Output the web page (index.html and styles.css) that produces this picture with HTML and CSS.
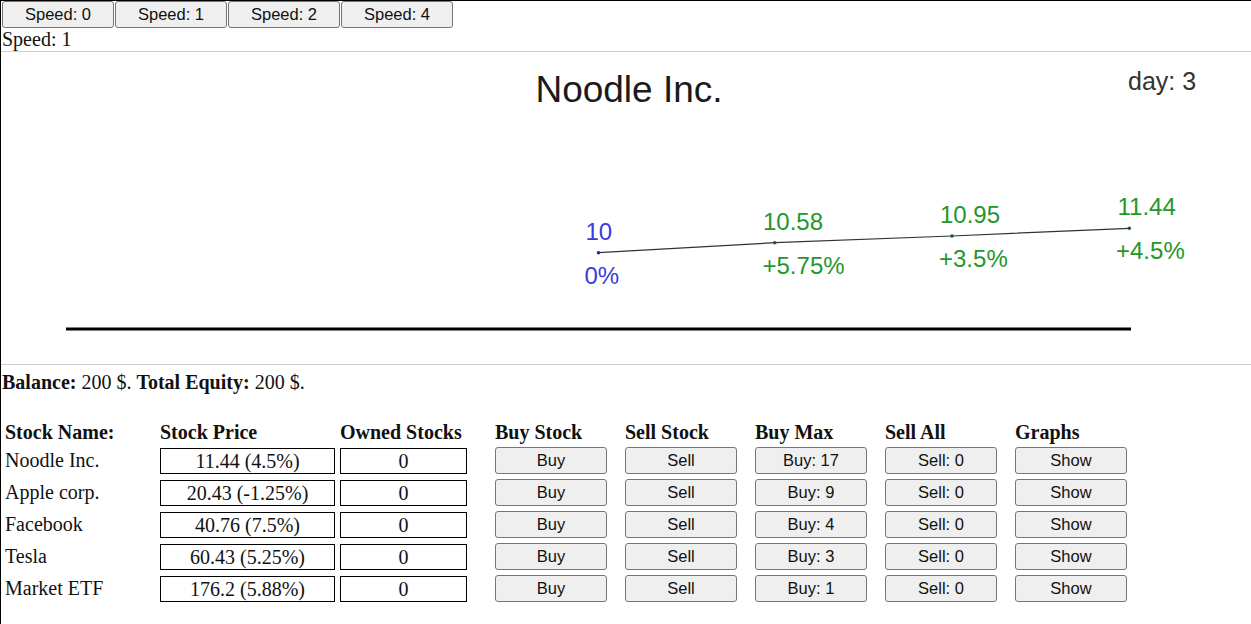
FILE: index.html
```html
<!DOCTYPE html>
<html>
<head>
<meta charset="utf-8">
<link rel="stylesheet" href="styles.css">
</head>
<body>
<div class="page">
  <div class="speeds">
    <button class="btn speed-btn">Speed: 0</button>
    <button class="btn speed-btn">Speed: 1</button>
    <button class="btn speed-btn">Speed: 2</button>
    <button class="btn speed-btn">Speed: 4</button>
  </div>
  <div class="speed-label">Speed: 1</div>
  <div class="chart">
    <svg class="chart-svg" width="1250" height="312" viewBox="0 0 1250 312">
      <text class="title" x="628" y="50" text-anchor="middle">Noodle Inc.</text>
      <text class="day" x="1127" y="38">day: 3</text>
      <polyline class="trend" points="597.5,200.7 773.7,190.7 951,184 1128.3,176.3"/>
      <circle class="dot-blue" cx="597.5" cy="200.7" r="1.8"/>
      <circle class="dot-green" cx="773.7" cy="190.7" r="1.8"/>
      <circle class="dot-green" cx="951" cy="184" r="1.8"/>
      <circle class="dot-green" cx="1128.3" cy="176.3" r="1.8"/>
      <text class="lbl blue" x="584.5" y="187.5">10</text>
      <text class="lbl blue" x="583.5" y="231.5">0%</text>
      <text class="lbl green" x="762" y="177.5">10.58</text>
      <text class="lbl green" x="761.5" y="221.5">+5.75%</text>
      <text class="lbl green" x="939" y="171">10.95</text>
      <text class="lbl green" x="938" y="215">+3.5%</text>
      <text class="lbl green" x="1116.5" y="163">11.44</text>
      <text class="lbl green" x="1115" y="206.5">+4.5%</text>
      <line class="axis" x1="65" y1="277" x2="1130" y2="277"/>
    </svg>
  </div>
  <p class="balance"><b>Balance:</b> 200 $. <b>Total Equity:</b> 200 $.</p>
  <div class="stocks">
    <div class="row head">
      <div>Stock Name:</div>
      <div>Stock Price</div>
      <div>Owned Stocks</div>
      <div>Buy Stock</div>
      <div>Sell Stock</div>
      <div>Buy Max</div>
      <div>Sell All</div>
      <div>Graphs</div>
    </div>
    <div class="row">
      <div class="name">Noodle Inc.</div>
      <div><div class="box price">11.44 (4.5%)</div></div>
      <div><div class="box owned">0</div></div>
      <div><button class="btn act">Buy</button></div>
      <div><button class="btn act">Sell</button></div>
      <div><button class="btn act">Buy: 17</button></div>
      <div><button class="btn act">Sell: 0</button></div>
      <div><button class="btn act">Show</button></div>
    </div>
    <div class="row">
      <div class="name">Apple corp.</div>
      <div><div class="box price">20.43 (-1.25%)</div></div>
      <div><div class="box owned">0</div></div>
      <div><button class="btn act">Buy</button></div>
      <div><button class="btn act">Sell</button></div>
      <div><button class="btn act">Buy: 9</button></div>
      <div><button class="btn act">Sell: 0</button></div>
      <div><button class="btn act">Show</button></div>
    </div>
    <div class="row">
      <div class="name">Facebook</div>
      <div><div class="box price">40.76 (7.5%)</div></div>
      <div><div class="box owned">0</div></div>
      <div><button class="btn act">Buy</button></div>
      <div><button class="btn act">Sell</button></div>
      <div><button class="btn act">Buy: 4</button></div>
      <div><button class="btn act">Sell: 0</button></div>
      <div><button class="btn act">Show</button></div>
    </div>
    <div class="row">
      <div class="name">Tesla</div>
      <div><div class="box price">60.43 (5.25%)</div></div>
      <div><div class="box owned">0</div></div>
      <div><button class="btn act">Buy</button></div>
      <div><button class="btn act">Sell</button></div>
      <div><button class="btn act">Buy: 3</button></div>
      <div><button class="btn act">Sell: 0</button></div>
      <div><button class="btn act">Show</button></div>
    </div>
    <div class="row">
      <div class="name">Market ETF</div>
      <div><div class="box price">176.2 (5.88%)</div></div>
      <div><div class="box owned">0</div></div>
      <div><button class="btn act">Buy</button></div>
      <div><button class="btn act">Sell</button></div>
      <div><button class="btn act">Buy: 1</button></div>
      <div><button class="btn act">Sell: 0</button></div>
      <div><button class="btn act">Show</button></div>
    </div>
  </div>
</div>
</body>
</html>
```
FILE: styles.css
```css
html, body {
  margin: 0;
  padding: 0;
  background: #fff;
}
.page {
  border-top: 1px solid #000;
  border-left: 1px solid #000;
  min-height: 100vh;
  box-sizing: border-box;
  font-family: "Liberation Serif", "Times New Roman", serif;
  font-size: 20px;
  color: #111;
}
.speeds {
  display: flex;
  gap: 1px;
  padding-left: 1px;
  height: 27px;
}
.btn {
  font-family: "Liberation Sans", Arial, sans-serif;
  font-size: 16.5px;
  color: #111;
  background: #efefef;
  border: 1px solid #767676;
  border-radius: 3px;
  margin: 0;
  padding: 0;
  box-sizing: border-box;
}
.speed-btn {
  width: 112px;
  height: 27px;
}
.speed-label {
  line-height: 23px;
  height: 23px;
  padding-left: 1px;
}
.chart {
  border-top: 1px solid #cfcfcf;
  border-bottom: 1px solid #cfcfcf;
  height: 312px;
}
.chart-svg {
  display: block;
}
.title {
  font-family: "Liberation Sans", Arial, sans-serif;
  font-size: 37px;
  fill: #1a1a1a;
}
.day {
  font-family: "Liberation Sans", Arial, sans-serif;
  font-size: 25px;
  fill: #333;
}
.trend {
  fill: none;
  stroke: #333;
  stroke-width: 1.2;
}
.dot-blue { fill: #2a2a8a; }
.dot-green { fill: #1d5e1d; }
.lbl {
  font-family: "Liberation Sans", Arial, sans-serif;
  font-size: 24px;
}
.blue { fill: #3b3bd6; }
.green { fill: #24962a; }
.axis {
  stroke: #000;
  stroke-width: 3;
}
.balance {
  margin: 6px 0 0 1px;
  line-height: 23px;
}
.stocks {
  margin-top: 26px;
  padding-left: 4px;
  display: flex;
  flex-direction: column;
  gap: 5px;
}
.row {
  display: grid;
  grid-template-columns: 155px 180px 155px 130px 130px 130px 130px 130px;
  align-items: center;
  height: 27px;
}
.row.head {
  height: 24px;
  font-weight: bold;
  line-height: 23px;
  margin-bottom: -2px;
}
.box {
  border: 1px solid #000;
  box-sizing: border-box;
  height: 26px;
  line-height: 25px;
  text-align: center;
}
.price { width: 175px; }
.owned { width: 127px; }
.act {
  width: 112px;
  height: 27px;
  display: block;
}
```
